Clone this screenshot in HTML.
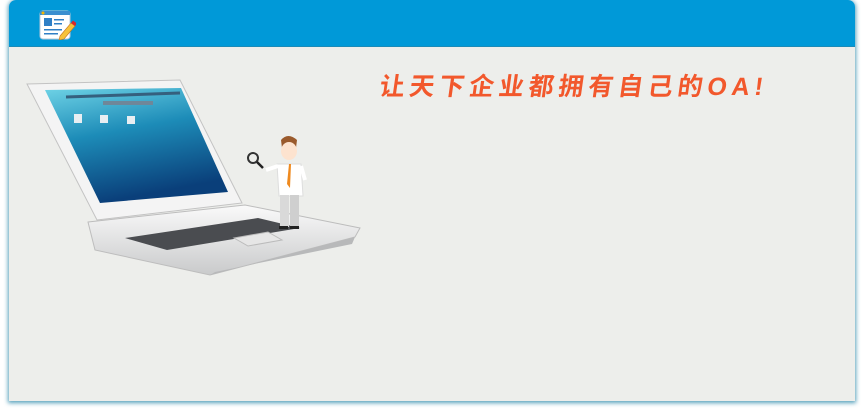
<!DOCTYPE html>
<html><head><meta charset="utf-8"><style>
body{margin:0;width:864px;height:412px;background:#fff;overflow:hidden;position:relative;font-family:"Liberation Sans","Noto Sans CJK SC",sans-serif}
.panel{position:absolute;left:9px;top:0;width:846px;height:401px;border-radius:7px 7px 0 0;background:#edeeeb;box-shadow:0 1px 4px 1px rgba(30,130,165,.75);overflow:hidden}
.hd{position:absolute;left:0;top:0;width:846px;height:46px;background:#0099d8;border-bottom:1px solid #1a8bb8}
.slogan{position:absolute;left:380px;top:67px;color:#f2582c;font-size:25px;font-weight:bold;letter-spacing:4.8px;font-family:"Liberation Sans","Noto Sans CJK SC",sans-serif;white-space:nowrap;transform:skewX(-8deg)}
</style></head><body>
<div class="panel"><div class="hd"></div></div>
<svg style="position:absolute;left:38px;top:10px" width="38" height="30" viewBox="0 0 38 30">
<rect x="2" y="1" width="30" height="28" rx="3" fill="#fff" stroke="#b8c8d8"/>
<rect x="2" y="1" width="30" height="4" fill="#3a8fd0"/>
<circle cx="5" cy="3" r="1.5" fill="#f4b400"/>
<rect x="6" y="8" width="8" height="8" fill="#2f7fc6"/>
<rect x="16" y="9" width="10" height="1.5" fill="#2f7fc6"/><rect x="16" y="13" width="8" height="1.5" fill="#2f7fc6"/>
<rect x="6" y="19" width="18" height="1.5" fill="#2f7fc6"/><rect x="6" y="23" width="14" height="1.5" fill="#2f7fc6"/>
<path d="M22 26 L33 13 L37 16 L26 29 L21 30 Z" fill="#f6c23a" stroke="#c9771c" stroke-width=".6"/>
<path d="M33 13 L35 10.5 L39 13.5 L37 16 Z" fill="#d7262b"/>
</svg>
<div class="slogan">让天下企业都拥有自己的OA!</div>
<svg style="position:absolute;left:20px;top:70px" width="350" height="210" viewBox="20 70 350 210">
<defs>
<linearGradient id="scr" x1="0" y1="0" x2="0.3" y2="1"><stop offset="0" stop-color="#6fd3e6"/><stop offset=".45" stop-color="#1d8cb8"/><stop offset="1" stop-color="#0a3f7a"/></linearGradient>
<linearGradient id="body" x1="0" y1="0" x2="0" y2="1"><stop offset="0" stop-color="#fafafa"/><stop offset="1" stop-color="#c9cacb"/></linearGradient>
</defs>
<path d="M27 84 L180 80 L242 203 L97 220 Z" fill="#f4f4f4" stroke="#c3c3c3"/>
<path d="M45 90 L181 88 L228 192 L100 203 Z" fill="url(#scr)"/>
<path d="M66 97 L180 93" stroke="#35607e" stroke-width="3"/>
<rect x="103" y="101" width="50" height="4" fill="#6f8799"/>
<rect x="74" y="114" width="8" height="9" fill="#e8eef2"/><rect x="100" y="115" width="8" height="8" fill="#e8eef2"/><rect x="127" y="116" width="8" height="8" fill="#e8eef2"/>
<path d="M88 222 L245 205 L360 228 L355 237 L210 275 L95 250 Z" fill="url(#body)" stroke="#bdbdbd"/>
<path d="M125 238 L258 218 L300 228 L167 250 Z" fill="#4a4c50"/>
<path d="M234 238 L268 232 L282 240 L248 246 Z" fill="#e6e6e6" stroke="#bbb"/>
<path d="M210 275 L355 237 L352 244 L215 272 Z" fill="#b8b9ba"/>
<circle cx="253" cy="158" r="5" fill="none" stroke="#333" stroke-width="2"/>
<path d="M257 162 L263 168" stroke="#222" stroke-width="2.5"/>
<path d="M281 140 Q288 132 297 140 L296 148 L282 148 Z" fill="#9a5a2c"/>
<ellipse cx="289" cy="151" rx="8" ry="9" fill="#fde3cf"/>
<path d="M277 164 L301 164 L303 196 L279 196 Z" fill="#fff" stroke="#ddd"/>
<path d="M289 164 L287 184 L290 188 L291 164 Z" fill="#ef8a1f"/>
<path d="M278 166 L266 170" stroke="#fff" stroke-width="4"/><path d="M301 166 L305 180" stroke="#fff" stroke-width="4"/>
<rect x="280" y="195" width="9" height="32" fill="#d9d9d9"/><rect x="290" y="195" width="9" height="32" fill="#cfcfcf"/>
<rect x="279" y="226" width="9" height="3" fill="#222"/><rect x="290" y="226" width="9" height="3" fill="#222"/>
</svg>
</body></html>
